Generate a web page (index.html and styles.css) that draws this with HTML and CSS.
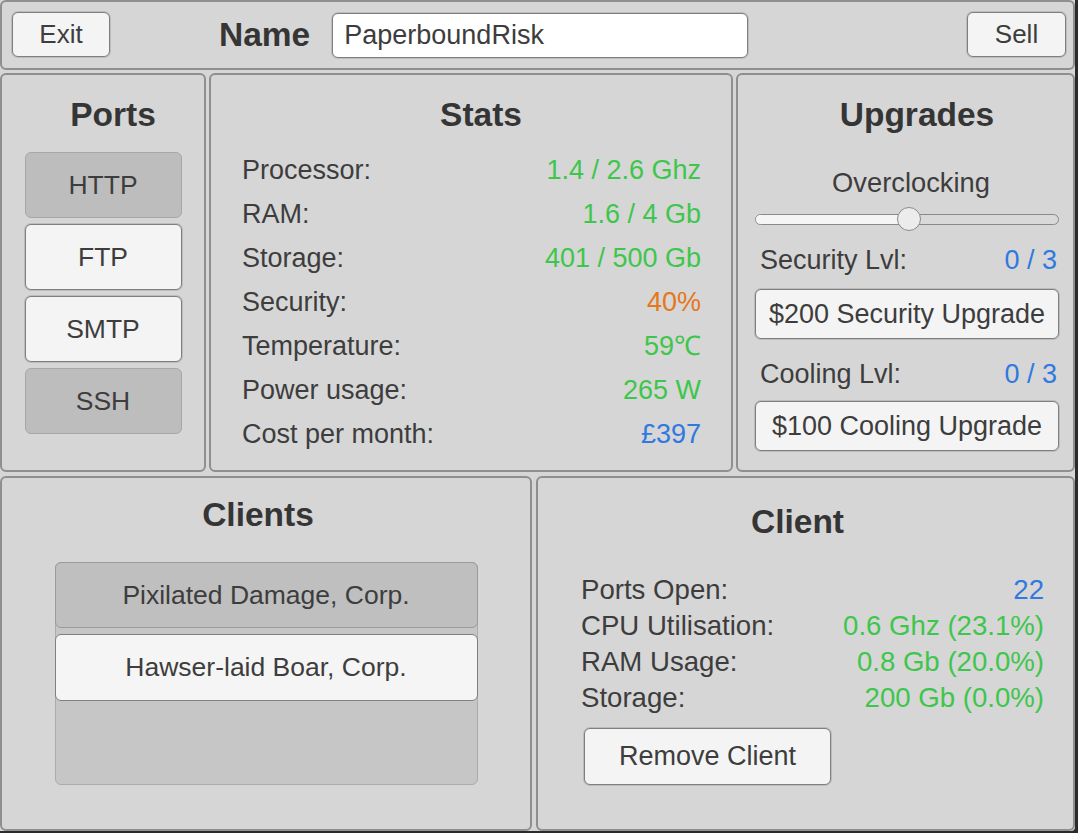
FILE: index.html
```html
<!DOCTYPE html>
<html lang="en">
<head>
<meta charset="utf-8">
<title>Server</title>
<link rel="stylesheet" href="styles.css">
</head>
<body>
<div class="app">
  <header class="panel topbar">
    <button class="btn btn-exit">Exit</button>
    <span class="name-label">Name</span>
    <div class="name-input">PaperboundRisk</div>
    <button class="btn btn-sell">Sell</button>
  </header>

  <div class="row row-mid">
    <section class="panel ports">
      <h2 class="title title-right">Ports</h2>
      <div class="port-list">
        <div class="port port-off">HTTP</div>
        <div class="port port-on">FTP</div>
        <div class="port port-on">SMTP</div>
        <div class="port port-off">SSH</div>
      </div>
    </section>

    <section class="panel stats">
      <h2 class="title title-right">Stats</h2>
      <div class="stat-rows">
        <div class="stat"><span>Processor:</span><span class="green">1.4 / 2.6 Ghz</span></div>
        <div class="stat"><span>RAM:</span><span class="green">1.6 / 4 Gb</span></div>
        <div class="stat"><span>Storage:</span><span class="green">401 / 500 Gb</span></div>
        <div class="stat"><span>Security:</span><span class="orange">40%</span></div>
        <div class="stat"><span>Temperature:</span><span class="green">59℃</span></div>
        <div class="stat"><span>Power usage:</span><span class="green">265 W</span></div>
        <div class="stat"><span>Cost per month:</span><span class="blue">£397</span></div>
      </div>
    </section>

    <section class="panel upgrades">
      <h2 class="title title-right">Upgrades</h2>
      <div class="overclock">Overclocking</div>
      <div class="slider">
        <div class="track"><div class="fill"></div></div>
        <div class="thumb"></div>
      </div>
      <div class="lvl lvl-sec"><span>Security Lvl:</span><span class="blue">0 / 3</span></div>
      <button class="btn btn-upgrade btn-sec">$200 Security Upgrade</button>
      <div class="lvl lvl-cool"><span>Cooling Lvl:</span><span class="blue">0 / 3</span></div>
      <button class="btn btn-upgrade btn-cool">$100 Cooling Upgrade</button>
    </section>
  </div>

  <div class="row row-bottom">
    <section class="panel clients">
      <h2 class="title title-left">Clients</h2>
      <div class="client-list">
        <div class="client-item item-selected">Pixilated Damage, Corp.</div>
        <div class="client-item item-normal">Hawser-laid Boar, Corp.</div>
      </div>
    </section>

    <section class="panel client">
      <h2 class="title title-left">Client</h2>
      <div class="client-rows">
        <div class="crow"><span>Ports Open:</span><span class="blue">22</span></div>
        <div class="crow"><span>CPU Utilisation:</span><span class="green">0.6 Ghz (23.1%)</span></div>
        <div class="crow"><span>RAM Usage:</span><span class="green">0.8 Gb (20.0%)</span></div>
        <div class="crow"><span>Storage:</span><span class="green">200 Gb (0.0%)</span></div>
      </div>
      <button class="btn btn-remove">Remove Client</button>
    </section>
  </div>
</div>
</body>
</html>
```
FILE: styles.css
```css
* { box-sizing: border-box; }

body {
  margin: 0;
  background: #2e2a2a;
  font-family: "Liberation Sans", Arial, sans-serif;
  color: #3d3d3d;
}

.app {
  width: 1075px;
  height: 831px;
  background: #d6d6d6;
  display: flex;
  flex-direction: column;
  border-radius: 0 0 4px 0;
}

.panel {
  background: #d6d6d6;
  border: 2px solid #8f8f8f;
  border-radius: 6px;
}

.green { color: #3ec64c; }
.blue { color: #2f79e0; }
.orange { color: #e5771c; }

.btn {
  font-family: "Liberation Sans", Arial, sans-serif;
  font-size: 27px;
  color: #3d3d3d;
  background: #f4f4f4;
  border: 1px solid #7f7f7f;
  box-shadow: 0 0 0 1px rgba(140, 140, 140, 0.35);
  border-radius: 6px;
  padding: 0;
  cursor: pointer;
}

/* Top bar */
.topbar {
  height: 70px;
  display: flex;
  align-items: center;
  padding: 0 7px 0 10px;
}
.btn-exit { width: 98px; height: 45px; margin-top: -1px; font-size: 26px; }
.name-label {
  margin-left: 109px;
  font-size: 33.5px;
  font-weight: bold;
  color: #353535;
}
.name-input {
  margin-left: 22px;
  width: 416px;
  height: 45px;
  background: #ffffff;
  border: 1px solid #7f7f7f;
  box-shadow: 0 0 0 1px rgba(140, 140, 140, 0.35);
  border-radius: 6px;
  padding-left: 11px;
  font-size: 27px;
  line-height: 43px;
  color: #3d3d3d;
}
.btn-sell { margin-left: auto; width: 99px; height: 45px; margin-top: -1px; font-size: 26px; }

/* Rows */
.row { display: flex; }
.row-mid { height: 399px; margin-top: 3px; gap: 3px; }
.row-bottom { height: 355px; margin-top: 4px; gap: 4px; }

.title {
  margin: 0;
  font-size: 33.5px;
  line-height: 37px;
  font-weight: bold;
  text-align: center;
  color: #353535;
}
.title-right { padding-left: 20px; }
.title-left { padding-right: 16px; }

/* Ports */
.ports { width: 206px; padding-top: 21px; }
.port-list {
  margin-top: 19px;
  display: flex;
  flex-direction: column;
  align-items: center;
  gap: 6px;
}
.port {
  width: 157px;
  height: 66px;
  border-radius: 6px;
  font-size: 26.5px;
  display: flex;
  align-items: center;
  justify-content: center;
}
.port-off {
  background: #bdbdbd;
  border: 1px solid #a7a7a7;
}
.port-on {
  background: #f4f4f4;
  border: 1px solid #7f7f7f;
  box-shadow: 0 0 0 1px rgba(140, 140, 140, 0.35);
}

/* Stats */
.stats { width: 524px; padding-top: 21px; }
.stat-rows { margin-top: 15px; padding: 0 30px 0 31px; }
.stat {
  display: flex;
  justify-content: space-between;
  font-size: 27px;
  line-height: 44px;
}

/* Upgrades */
.upgrades { flex: 1; padding: 21px 14px 0 17px; }
.overclock {
  margin-top: 34px;
  font-size: 27.3px;
  line-height: 32px;
  text-align: center;
  padding-left: 8px;
}
.slider {
  position: relative;
  margin-top: 8px;
  height: 24px;
  display: flex;
  align-items: center;
}
.track {
  width: 100%;
  height: 11px;
  border-radius: 6px;
  border: 1px solid #8a8a8a;
  background: #d9d9d9;
  overflow: hidden;
}
.fill { width: 50%; height: 100%; background: #f5f5f5; }
.thumb {
  position: absolute;
  left: 142px;
  top: 0;
  width: 24px;
  height: 24px;
  border-radius: 50%;
  background: #ececec;
  border: 1px solid #8a8a8a;
}
.lvl {
  display: flex;
  justify-content: space-between;
  font-size: 27px;
  line-height: 36px;
  padding: 0 2px 0 5px;
}
.lvl-sec { margin-top: 11px; }
.lvl-cool { margin-top: 17px; }
.btn-upgrade { width: 100%; height: 50px; display: block; }
.btn-sec { margin-top: 11px; }
.btn-cool { margin-top: 9px; }

/* Clients */
.clients { width: 532px; padding-top: 18px; }
.client-list {
  margin: 29px auto 0;
  width: 423px;
  height: 223px;
  background: #c6c6c6;
  border: 1px solid #ababab;
  border-radius: 6px;
  display: flex;
  flex-direction: column;
  gap: 6px;
}
.client-item {
  height: 66px;
  border-radius: 6px;
  font-size: 26.5px;
  display: flex;
  align-items: center;
  justify-content: center;
  margin: -1px -1px 0;
}
.item-selected {
  background: #bfbfbf;
  border: 1px solid #9b9b9b;
}
.item-normal {
  height: 67px;
  margin-top: 0;
  background: #f5f5f5;
  border: 1px solid #7f7f7f;
}

/* Client */
.client { flex: 1; padding-top: 25px; }
.client-rows { margin-top: 32px; padding: 0 29px 0 43px; }
.crow {
  display: flex;
  justify-content: space-between;
  font-size: 27.6px;
  line-height: 36px;
}
.btn-remove {
  display: block;
  margin: 12px 0 0 46px;
  width: 247px;
  height: 57px;
  font-size: 27px;
}
```
